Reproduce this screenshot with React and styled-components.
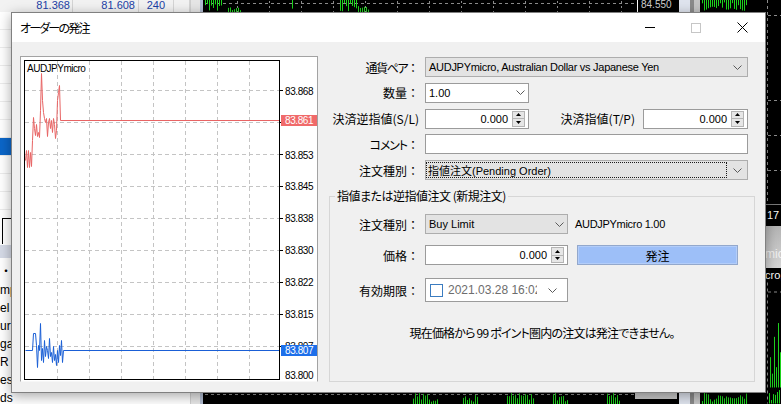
import React from "react";
import styled, { createGlobalStyle } from "styled-components";

const UI = `"Liberation Sans", "Noto Sans CJK JP", sans-serif`;
const JP = `"Noto Sans CJK JP", "Liberation Sans", sans-serif`;
const GREEN = "#1ed41e";
const GRID = "#8c8c8c";

const GlobalStyle = createGlobalStyle`
  html, body { margin: 0; padding: 0; background: #000; }
  * { box-sizing: border-box; }
`;

function rng(seed) {
  let s = seed;
  return () => {
    s = (s * 9301 + 49297) % 233280;
    return s / 233280;
  };
}

function Bars({ x0, x1, top, bottom, seed, hang, step = 2 }) {
  const r = rng(seed);
  const out = [];
  const span = bottom - top;
  for (let x = x0; x <= x1; x += step) {
    const len = span * (0.2 + 0.8 * r());
    const y1 = hang ? top : bottom - len;
    const y2 = hang ? top + len : bottom;
    out.push(<line key={x} x1={x + 0.5} x2={x + 0.5} y1={y1} y2={y2} />);
  }
  return <g stroke={GREEN} strokeWidth="1">{out}</g>;
}

/* ---------- desktop background ---------- */
const Desktop = styled.div`
  position: relative;
  width: 781px;
  height: 404px;
  overflow: hidden;
  display: grid;
  grid-template-columns: 203px 562px 16px;
  background: #000;
`;

const LeftPane = styled.div`
  display: grid;
  grid-template-columns: 1fr 13px;
  background: #fff;
  overflow: hidden;
`;

const LeftMain = styled.div`
  display: flex;
  flex-direction: column;
  min-width: 0;
`;

const QuoteRow = styled.div`
  flex: none;
  height: 12px;
  display: grid;
  grid-template-columns: 73px 66px 35px 1fr;
  background: #f2f2f2;
`;

const QuoteCell = styled.div`
  font: 11px ${UI};
  line-height: 13px;
  margin-top: -1px;
  color: #1b3fa6;
  text-align: right;
  padding-right: ${(p) => p.$pad}px;
  border-right: 1px solid #d4d4d4;
  overflow: hidden;
`;

const NavRow = styled.div`
  flex: none;
  height: 18px;
  border-bottom: 1px solid #ececec;
  background: ${(p) => (p.$sel ? "#0b66c9" : "#fff")};
`;

const ToolTab = styled.div`
  flex: none;
  height: 26px;
  margin: 8px 0 0 2px;
  border-top: 1px solid #000;
  border-left: 1px solid #000;
  background: #fff;
`;

const TabBand = styled.div`
  flex: none;
  height: 13px;
  margin-top: 1px;
  background: #d5dae6;
`;

const LogList = styled.div`
  padding-top: 5px;
`;

const LogRow = styled.div`
  height: 18px;
  font: 12px ${UI};
  line-height: 18px;
  color: #000;
  white-space: nowrap;
  overflow: hidden;
`;

const LeftScroll = styled.div`
  background: #e6e6e6;
  border-left: 1px solid #cfcfcf;
  border-right: 3px solid #b0bbd0;
`;

const MidChart = styled.div`
  background: #000;
`;

const BackSvg = styled.svg`
  display: block;
`;

const RightStrip = styled.div`
  display: flex;
  flex-direction: column;
  background: #000;
  overflow: hidden;
`;

const StripSvg = styled.svg`
  display: block;
  flex: ${(p) => (p.$grow ? "1" : "none")};
`;

const StripHeader = styled.div`
  flex: none;
  height: 22px;
  border-top: 1px solid #7a7a7a;
  font: 11px ${UI};
  line-height: 20px;
  color: #fff;
  padding-left: 2px;
  white-space: nowrap;
  overflow: hidden;
`;

const StripAccent = styled.span`
  color: #7fb2ff;
`;

const StripTab = styled.div`
  flex: none;
  height: 42px;
  background: linear-gradient(#b4b4b4, #d6d6d6);
  color: #f2f2f2;
  font: 12px ${UI};
  padding-top: 21px;
  white-space: nowrap;
  overflow: hidden;
`;

const StripSymbol = styled.div`
  flex: none;
  height: 14px;
  font: 11px ${UI};
  line-height: 14px;
  color: #fff;
  white-space: nowrap;
  overflow: hidden;
`;

/* ---------- dialog ---------- */
const Window = styled.div`
  position: absolute;
  left: 11px;
  top: 12px;
  width: 755px;
  height: 381px;
  display: flex;
  flex-direction: column;
  background: #f0f0f0;
  border: 1px solid #808080;
  box-shadow: 0 3px 12px rgba(0, 0, 0, 0.35);
`;

const TitleBar = styled.div`
  flex: none;
  height: 29px;
  display: flex;
  align-items: center;
  background: #fff;
`;

const Title = styled.div`
  flex: 1;
  padding-left: 8px;
  font: 12px ${JP};
  font-feature-settings: "palt";
  letter-spacing: -1.8px;
  color: #000;
`;

const CaptionButton = styled.div`
  width: 46px;
  height: 29px;
  display: flex;
  align-items: center;
  justify-content: center;
`;

const Body = styled.div`
  flex: 1;
  display: flex;
  gap: 11px;
  padding: 14px 0 10px 8px;
  min-height: 0;
`;

const ChartPanel = styled.div`
  flex: none;
  width: 298px;
  background: #fff;
  border: 1px solid #a3a3a3;
  border-bottom-color: #f7f7f7;
`;

const ChartCanvas = styled.svg`
  display: block;
`;

const FormCol = styled.div`
  flex: none;
  width: 426px;
  display: flex;
  flex-direction: column;
  padding-top: 1px;
`;

const TopForm = styled.div`
  display: grid;
  grid-template-columns: 90px 323px;
  grid-auto-rows: 20px;
  column-gap: 6px;
  row-gap: 5.75px;
  align-items: center;
`;

const Label = styled.div`
  font: 12px ${JP};
  color: #000;
  text-align: right;
  white-space: nowrap;
  margin-right: ${(p) => p.$mr || 0}px;
  flex: ${(p) => (p.$grow ? "1" : "none")};
`;

const Name = styled.span`
  font-feature-settings: "palt";
  letter-spacing: ${(p) => p.$ls || 0}px;
`;

const Colon = styled.span`
  font-feature-settings: normal;
`;

const Field = styled.div`
  width: ${(p) => (p.$w ? `${p.$w}px` : "auto")};
  height: ${(p) => p.$h || 20}px;
  display: flex;
  align-items: center;
  background: ${(p) => (p.$grey ? "#e3e3e3" : "#fff")};
  border: 1px solid ${(p) => (p.$grey ? "#adadad" : "#9b9b9b")};
  flex: none;
`;

const ValueText = styled.div`
  flex: 1;
  min-width: 0;
  padding-left: 3px;
  font: 11px ${UI};
  letter-spacing: ${(p) => (p.$tight ? "-0.28px" : "0")};
  color: #000;
  white-space: nowrap;
  overflow: hidden;
`;

const FocusBox = styled.div`
  flex: 1;
  height: 16px;
  display: flex;
  align-items: center;
  padding-left: 1px;
  border: 1px dotted #1a1a1a;
  font: 11px ${UI};
  color: #000;
  white-space: nowrap;
  overflow: hidden;
`;

const ChevronZone = styled.div`
  flex: none;
  width: ${(p) => p.$w}px;
  display: flex;
  align-items: center;
  justify-content: center;
`;

const SpinValue = styled.div`
  flex: 1;
  text-align: right;
  padding-right: 4px;
  font: 11px ${UI};
  color: #000;
`;

const SpinBtn = styled.div`
  flex: none;
  width: 13px;
  height: 16px;
  margin-right: 3px;
  display: flex;
  flex-direction: column;
  border: 1px solid #b4b4b4;
  background: #e6e6e6;
`;

const SpinHalf = styled.div`
  flex: 1;
  display: flex;
  align-items: center;
  justify-content: center;
  & + & {
    border-top: 1px solid #b4b4b4;
  }
`;

const PairRow = styled.div`
  display: flex;
  align-items: center;
`;

const Group = styled.fieldset`
  flex: 1;
  min-width: 0;
  margin: 8px 0 0 0;
  padding: 0;
  border: 1px solid #d6d6d6;
  display: flex;
  flex-direction: column;
`;

const Legend = styled.legend`
  margin-left: 5px;
  padding: 0 2px;
  font: 12px ${JP};
  font-feature-settings: "palt";
  letter-spacing: -0.5px;
  line-height: 16px;
  color: #000;
`;

const GroupRow = styled.div`
  display: grid;
  grid-template-columns: 89px 143px auto;
  column-gap: 6px;
  align-items: center;
  height: ${(p) => p.$h}px;
  margin-top: ${(p) => p.$mt}px;
`;

const InfoText = styled.div`
  margin-left: 1px;
  font: 11px ${UI};
  letter-spacing: -0.3px;
  color: #000;
  white-space: nowrap;
`;

const OrderButton = styled.div`
  margin-left: 3px;
  width: 161px;
  height: 20px;
  display: flex;
  align-items: center;
  justify-content: center;
  background: #9dbff8;
  border: 1px solid #93a8cc;
  box-shadow: inset 0 0 0 1px #b3cdf9;
  font: 12px ${JP};
  color: #000;
`;

const Check = styled.div`
  flex: none;
  width: 13px;
  height: 13px;
  margin-left: 4px;
  border: 1px solid #3b7cc0;
  background: #fff;
`;

const DateText = styled.div`
  flex: 1;
  min-width: 0;
  margin-left: 5px;
  font: 12px ${UI};
  color: #6d6d6d;
  white-space: nowrap;
  overflow: hidden;
`;

const Message = styled.div`
  margin-top: 23px;
  font: 12px ${JP};
  font-feature-settings: "palt";
  letter-spacing: -0.8px;
  line-height: 16px;
  text-align: center;
  color: #000;
`;

/* ---------- small drawings ---------- */
const Chevron = () => (
  <svg width="9" height="5" viewBox="0 0 9 5">
    <polyline points="0.5,0.5 4.5,4.5 8.5,0.5" fill="none" stroke="#5a5a5a" strokeWidth="1" />
  </svg>
);

const UpArrow = () => (
  <svg width="5" height="3" viewBox="0 0 5 3">
    <polygon points="2.5,0 5,3 0,3" fill="#000" />
  </svg>
);

const DownArrow = () => (
  <svg width="5" height="3" viewBox="0 0 5 3">
    <polygon points="0,0 5,0 2.5,3" fill="#000" />
  </svg>
);

const Spin = ({ w, value }) => (
  <Field $w={w}>
    <SpinValue>{value}</SpinValue>
    <SpinBtn>
      <SpinHalf><UpArrow /></SpinHalf>
      <SpinHalf><DownArrow /></SpinHalf>
    </SpinBtn>
  </Field>
);

const Lbl = ({ name, colon = true, ls = 0 }) => (
  <Label>
    <Name $ls={ls}>{name}</Name>
    {colon && <Colon>：</Colon>}
  </Label>
);

/* ---------- chart ---------- */
const RED_PTS =
  "25,160 26,150 27,167 28,150 29,167 30,152 31,166 32,140 33,117 34,128 35,135 36,124 37,136 38,132 39,137 40,110 41,73 42,100 43,112 44,118 45,122 46,118 47,136 48,122 49,118 50,128 51,120 52,132 53,118 54,124 55,138 56,130 57,100 58,92 59,85 60,120 279,120";
const BLUE_PTS =
  "25,350 32,350 33,333 35,333 36,345 37,367 38,345 39,350 40,323 41,360 42,348 43,362 44,340 45,356 46,346 47,350 48,358 49,338 50,356 51,352 52,362 53,346 54,360 55,354 56,365 57,350 58,362 59,345 60,355 61,340 62,362 63,350 279,350";

const PriceChart = () => {
  const vx = [57, 89, 121, 153, 185, 217, 249];
  const hy = [90, 122, 154, 186, 218, 250, 282, 314, 346];
  const labels = [
    ["83.868", 91],
    ["83.853", 155],
    ["83.845", 186],
    ["83.838", 218],
    ["83.830", 250],
    ["83.822", 282],
    ["83.815", 314],
    ["83.807", 346],
    ["83.800", 375],
  ];
  const txt = { fontFamily: "Liberation Sans, sans-serif", fontSize: 10, letterSpacing: -0.4 };
  return (
    <ChartCanvas width="296" height="324" viewBox="21 57 296 324">
      <g stroke="#c4c4c4" strokeWidth="1" strokeDasharray="4 3">
        {vx.map((x) => (
          <line key={x} x1={x + 0.5} x2={x + 0.5} y1="61" y2="379" />
        ))}
        {hy.map((y) => (
          <line key={y} x1="25" x2="279" y1={y + 0.5} y2={y + 0.5} />
        ))}
      </g>
      <g stroke="#000" strokeWidth="1">
        {hy.map((y) => (
          <line key={y} x1="279" x2="283" y1={y + 0.5} y2={y + 0.5} />
        ))}
      </g>
      <polyline points={RED_PTS} fill="none" stroke="#e86464" strokeWidth="1" transform="translate(0.5,0.5)" />
      <polyline points={BLUE_PTS} fill="none" stroke="#1a5fd6" strokeWidth="1" transform="translate(0.5,0.5)" />
      <rect x="24.5" y="60.5" width="255" height="319" fill="none" stroke="#000" strokeWidth="1" />
      <text x="27" y="72" fill="#000" style={{ ...txt, letterSpacing: -0.5 }}>AUDJPYmicro</text>
      {labels.map(([t, y]) => (
        <text key={t} x="285" y={y + 3.5} fill="#000" style={txt}>{t}</text>
      ))}
      <rect x="281" y="115" width="37" height="11" fill="#f06a6a" />
      <text x="285" y="124" fill="#fff" style={txt}>83.861</text>
      <rect x="281" y="345" width="36" height="11" fill="#1d6fea" />
      <text x="285" y="354" fill="#fff" style={txt}>83.807</text>
    </ChartCanvas>
  );
};

const Backdrop = () => (
  <BackSvg width="562" height="404" viewBox="203 0 562 404">
    <rect x="203" y="0" width="562" height="404" fill="#000" />
    <line x1="205" x2="637" y1="3.5" y2="3.5" stroke={GRID} strokeDasharray="3 3" />
    {[237, 269, 301, 333, 365, 397, 429, 461, 493, 525, 557, 589, 621].map((x) => (
      <line key={x} x1={x + 0.5} x2={x + 0.5} y1="1" y2="12" stroke={GRID} strokeDasharray="2 3" />
    ))}
    <Bars x0={205} x1={222} top={0} bottom={11} seed={3} hang />
    <Bars x0={228} x1={240} top={5} bottom={12} seed={7} />
    <Bars x0={292} x1={292} top={0} bottom={12} seed={11} hang />
    <Bars x0={340} x1={356} top={0} bottom={12} seed={17} hang />
    <Bars x0={358} x1={368} top={6} bottom={12} seed={19} />
    <line x1="637.5" x2="637.5" y1="0" y2="12" stroke="#fff" />
    <text x="641" y="8" fill="#d0d0d0" style={{ fontFamily: "Liberation Sans, sans-serif", fontSize: 10 }}>84.550</text>
    <rect x="679" y="0" width="11" height="12" fill="#dfe4ee" />
    <rect x="690" y="0" width="4" height="12" fill="#8a8a8a" />
    <rect x="694" y="0" width="6" height="12" fill="#c4c4c4" />
    <Bars x0={702} x1={747} top={0} bottom={11} seed={23} hang />
    <line x1="205" x2="635" y1="394.5" y2="394.5" stroke={GRID} strokeDasharray="3 3" />
    <Bars x0={413} x1={437} top={393} bottom={404} seed={29} />
    <Bars x0={463} x1={477} top={393} bottom={404} seed={31} />
    <Bars x0={507} x1={533} top={393} bottom={404} seed={37} />
    <Bars x0={553} x1={567} top={393} bottom={404} seed={41} />
    <Bars x0={607} x1={620} top={393} bottom={404} seed={43} />
    <rect x="635" y="393" width="42" height="6" fill="#c8c8c8" />
    <rect x="679" y="393" width="11" height="11" fill="#dfe4ee" />
    <rect x="690" y="393" width="4" height="11" fill="#8a8a8a" />
    <rect x="694" y="393" width="6" height="11" fill="#c4c4c4" />
    <Bars x0={702} x1={747} top={393} bottom={404} seed={47} />
  </BackSvg>
);

export default function App() {
  return (
    <>
      <GlobalStyle />
      <Desktop>
        <LeftPane>
          <LeftMain>
            <QuoteRow>
              <QuoteCell $pad={2}>81.368</QuoteCell>
              <QuoteCell $pad={3}>81.608</QuoteCell>
              <QuoteCell $pad={8}>240</QuoteCell>
              <QuoteCell $pad={0} />
            </QuoteRow>
            {Array.from({ length: 11 }).map((_, i) => (
              <NavRow key={i} $sel={i === 7} />
            ))}
            <ToolTab />
            <TabBand />
            <LogList>
              {["・ウ", "mp", "el", "ur", "ga", "R", "es", "ds"].map((t) => (
                <LogRow key={t}>{t}</LogRow>
              ))}
            </LogList>
          </LeftMain>
          <LeftScroll />
        </LeftPane>

        <MidChart>
          <Backdrop />
        </MidChart>

        <RightStrip>
          <StripSvg width="16" height="204" viewBox="0 0 16 204">
            <line x1="2.5" x2="2.5" y1="0" y2="204" stroke={GRID} strokeDasharray="3 3" />
            {[15, 100, 135, 170].map((y) => (
              <line key={y} x1="3" x2="16" y1={y + 0.5} y2={y + 0.5} stroke={GRID} strokeDasharray="3 3" />
            ))}
          </StripSvg>
          <StripHeader>
            17 <StripAccent>M</StripAccent>
          </StripHeader>
          <StripTab>mic</StripTab>
          <StripSymbol>cro,</StripSymbol>
          <StripSvg $grow width="16" height="121" viewBox="0 283 16 121">
            <line x1="2.5" x2="2.5" y1="283" y2="404" stroke={GRID} strokeDasharray="3 3" />
            <line x1="3" x2="16" y1="292.5" y2="292.5" stroke={GRID} strokeDasharray="3 3" />
            <Bars x0={5} x1={15} top={322} bottom={388} seed={53} />
            <Bars x0={4} x1={15} top={388} bottom={404} seed={59} />
          </StripSvg>
        </RightStrip>

        <Window>
          <TitleBar>
            <Title>オーダーの発注</Title>
            <CaptionButton>
              <svg width="10" height="1" viewBox="0 0 10 1">
                <rect width="10" height="1" fill="#000" />
              </svg>
            </CaptionButton>
            <CaptionButton>
              <svg width="10" height="10" viewBox="0 0 10 10">
                <rect x="0.5" y="0.5" width="9" height="9" fill="none" stroke="#c6c6c6" />
              </svg>
            </CaptionButton>
            <CaptionButton>
              <svg width="11" height="11" viewBox="0 0 11 11">
                <path d="M0.5 0.5 L10.5 10.5 M10.5 0.5 L0.5 10.5" stroke="#000" strokeWidth="1" />
              </svg>
            </CaptionButton>
          </TitleBar>

          <Body>
            <ChartPanel>
              <PriceChart />
            </ChartPanel>

            <FormCol>
              <TopForm>
                <Lbl name="通貨ペア" ls={-1.5} />
                <Field $grey>
                  <ValueText $tight>AUDJPYmicro, Australian Dollar vs Japanese Yen</ValueText>
                  <ChevronZone $w={20}><Chevron /></ChevronZone>
                </Field>

                <Lbl name="数量" />
                <PairRow>
                  <Field $w={104}>
                    <ValueText>1.00</ValueText>
                    <ChevronZone $w={16}><Chevron /></ChevronZone>
                  </Field>
                </PairRow>

                <Lbl name="決済逆指値(S/L)" colon={false} />
                <PairRow>
                  <Spin w={104} value="0.000" />
                  <Label $grow $mr={8}>
                    <Name>決済指値(T/P)</Name>
                  </Label>
                  <Spin w={105} value="0.000" />
                </PairRow>

                <Lbl name="コメント" ls={-1.1} />
                <Field />

                <Lbl name="注文種別" />
                <Field $grey>
                  <FocusBox>指値注文(Pending Order)</FocusBox>
                  <ChevronZone $w={20}><Chevron /></ChevronZone>
                </Field>
              </TopForm>

              <Group>
                <Legend>指値または逆指値注文 (新規注文)</Legend>

                <GroupRow $h={20} $mt={10}>
                  <Lbl name="注文種別" />
                  <Field $grey $w={143}>
                    <ValueText>Buy Limit</ValueText>
                    <ChevronZone $w={16}><Chevron /></ChevronZone>
                  </Field>
                  <InfoText>AUDJPYmicro 1.00</InfoText>
                </GroupRow>

                <GroupRow $h={20} $mt={11}>
                  <Lbl name="価格" />
                  <Spin w={143} value="0.000" />
                  <OrderButton>発注</OrderButton>
                </GroupRow>

                <GroupRow $h={24} $mt={13}>
                  <Lbl name="有効期限" />
                  <Field $w={143} $h={24}>
                    <Check />
                    <DateText>2021.03.28 16:02</DateText>
                    <ChevronZone $w={30}><Chevron /></ChevronZone>
                  </Field>
                </GroupRow>

                <Message>現在価格から 99 ポイント圏内の注文は発注できません。</Message>
              </Group>
            </FormCol>
          </Body>
        </Window>
      </Desktop>
    </>
  );
}
